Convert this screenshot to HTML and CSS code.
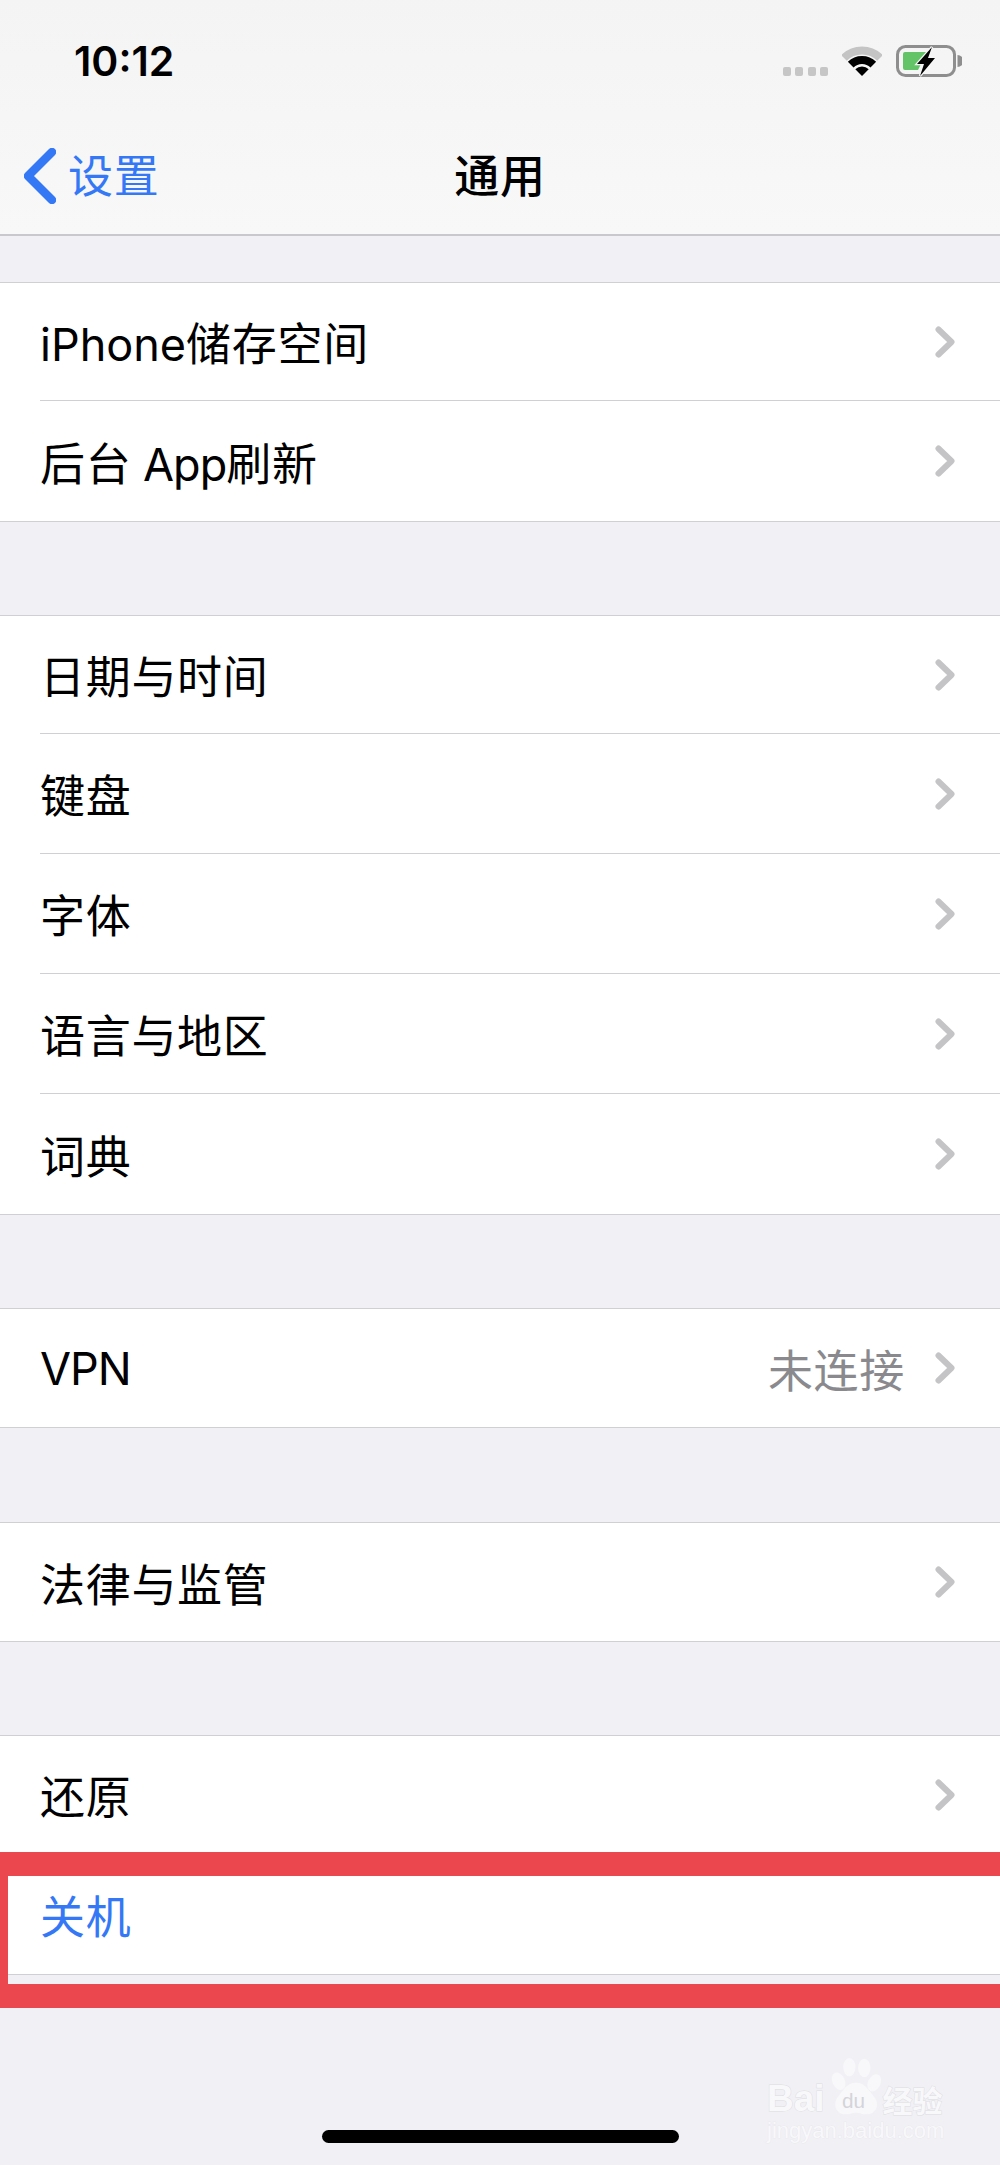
FILE: index.html
```html
<!DOCTYPE html>
<html lang="zh-CN">
<head>
    <meta charset="UTF-8">
    <meta name="viewport" content="width=device-width, initial-scale=1.0">
    <title>通用</title>
    <link rel="stylesheet" href="styles.css">
</head>
<body>

<div class="page">
    <header class="nav">
        <div class="status-bar">
            <span class="time">10:12</span>
            <div class="status-icons">
                <div class="signal"><i></i><i></i><i></i><i></i></div>
                <svg class="wifi" viewBox="0 0 40 30" width="40" height="30">
                    <path d="M1.97 11.97A25.5 25.5 0 0 1 38.03 11.97" fill="none" stroke="#c4c4c4" stroke-width="8"/>
                    <path d="M8.69 18.69A16 16 0 0 1 31.31 18.69" fill="none" stroke="#000" stroke-width="8"/>
                    <path d="M20 30L13.3 23.3A9.5 9.5 0 0 1 26.7 23.3Z" fill="#000"/>
                </svg>
                <svg class="battery" viewBox="0 0 66 32" width="66" height="32">
                    <rect x="1.5" y="1.5" width="57" height="29" rx="8" fill="none" stroke="#8e8e8e" stroke-width="3"/>
                    <path d="M61.5 10a6 6 0 0 1 0 12Z" fill="#8e8e8e"/>
                    <path d="M9 7H31L22 25H9a2 2 0 0 1-2-2V9a2 2 0 0 1 2-2Z" fill="#62c466"/>
                    <path d="M36 2L21 19H28L24 31L39 13H32Z" fill="#000" stroke="#f6f6f7" stroke-width="2.5" paint-order="stroke"/>
                </svg>
            </div>
        </div>
        <div class="nav-bar">
            <a class="back" href="#">
                <svg viewBox="0 0 32 56" width="32" height="56">
                    <path d="M28 4L4 28L28 52" fill="none" stroke="#3478f6" stroke-width="8.5" stroke-linecap="round" stroke-linejoin="round"/>
                </svg>
                <span>设置</span>
            </a>
            <h1>通用</h1>
            <span></span>
        </div>
    </header>

    <section class="group first">
        <a class="row" href="#"><span class="row-in"><span><span class="latin">iPhone</span>储存空间</span><svg class="chev" viewBox="0 0 20 32" width="20" height="32"><path d="M3.5 3.5L16.5 16L3.5 28.5"/></svg></span></a>
        <a class="row" href="#"><span class="row-in"><span>后台<span class="latin-tight"> App</span>刷新</span><svg class="chev" viewBox="0 0 20 32" width="20" height="32"><path d="M3.5 3.5L16.5 16L3.5 28.5"/></svg></span></a>
    </section>

    <section class="group">
        <a class="row" href="#"><span class="row-in"><span>日期与时间</span><svg class="chev" viewBox="0 0 20 32" width="20" height="32"><path d="M3.5 3.5L16.5 16L3.5 28.5"/></svg></span></a>
        <a class="row" href="#"><span class="row-in"><span>键盘</span><svg class="chev" viewBox="0 0 20 32" width="20" height="32"><path d="M3.5 3.5L16.5 16L3.5 28.5"/></svg></span></a>
        <a class="row" href="#"><span class="row-in"><span>字体</span><svg class="chev" viewBox="0 0 20 32" width="20" height="32"><path d="M3.5 3.5L16.5 16L3.5 28.5"/></svg></span></a>
        <a class="row" href="#"><span class="row-in"><span>语言与地区</span><svg class="chev" viewBox="0 0 20 32" width="20" height="32"><path d="M3.5 3.5L16.5 16L3.5 28.5"/></svg></span></a>
        <a class="row" href="#"><span class="row-in"><span>词典</span><svg class="chev" viewBox="0 0 20 32" width="20" height="32"><path d="M3.5 3.5L16.5 16L3.5 28.5"/></svg></span></a>
    </section>

    <section class="group">
        <a class="row" href="#"><span class="row-in"><span class="vpn">VPN</span><span class="value">未连接</span><svg class="chev" viewBox="0 0 20 32" width="20" height="32"><path d="M3.5 3.5L16.5 16L3.5 28.5"/></svg></span></a>
    </section>

    <section class="group legal">
        <a class="row" href="#"><span class="row-in"><span>法律与监管</span><svg class="chev" viewBox="0 0 20 32" width="20" height="32"><path d="M3.5 3.5L16.5 16L3.5 28.5"/></svg></span></a>
    </section>

    <section class="group">
        <a class="row" href="#"><span class="row-in"><span>还原</span><svg class="chev" viewBox="0 0 20 32" width="20" height="32"><path d="M3.5 3.5L16.5 16L3.5 28.5"/></svg></span></a>
        <a class="row action" href="#"><span class="row-in"><span>关机</span></span></a>
    </section>

    <div class="home-bar"></div>

    <!-- recuadro rojo y marca de agua van encima del contenido -->
    <div class="highlight"></div>
    <div class="watermark">
        <div class="wm-logo">
            <span class="wm-bai">Bai</span>
            <svg class="wm-paw" viewBox="0 0 64 70" width="54" height="58">
                <ellipse cx="11" cy="28" rx="7.5" ry="11" transform="rotate(-25 11 28)"/>
                <ellipse cx="24" cy="11" rx="7.5" ry="11"/>
                <ellipse cx="42" cy="12" rx="7.5" ry="11"/>
                <ellipse cx="54" cy="30" rx="7.5" ry="11" transform="rotate(25 54 30)"/>
                <path d="M32 30C43 30 47 39 54 47C62 57 55 68 45 68C39 68 37 66 32 66C27 66 25 68 19 68C9 68 3 57 10 47C17 39 21 30 32 30Z"/>
                <text x="15" y="60">du</text>
            </svg>
            <span class="wm-cn">经验</span>
        </div>
        <div class="wm-url">jingyan.baidu.com</div>
    </div>
</div>

</body>
</html>
```

FILE: styles.css
```css
* {
    box-sizing: border-box;
}

body {
    font-family: "Inter", "Noto Sans CJK SC", sans-serif;
    background-color: #f1f0f5;
    color: #000;
    margin: 0;
    padding: 0;
}

a {
    color: inherit;
    text-decoration: none;
}

.page {
    position: relative;
    width: 1000px;
    height: 2165px;
    overflow: hidden;
}

.nav {
    height: 236px;
    background: linear-gradient(180deg, #f4f4f5 0%, #f8f8f9 100%);
    border-bottom: 2px solid #c9c8cd;
}

.status-bar {
    height: 120px;
    display: flex;
    align-items: center;
    justify-content: space-between;
    padding: 0 38px 0 74px;
}

.time {
    font-size: 41px;
    font-weight: 600;
    margin-top: 2px;
}

.status-icons {
    display: flex;
    align-items: center;
    gap: 14px;
    margin-top: 2px;
}

.signal {
    display: flex;
    gap: 4.5px;
    margin-top: 21px;
}

.signal i {
    width: 8px;
    height: 9px;
    border-radius: 2px;
    background-color: #c6c6c6;
}

.wifi,
.battery {
    display: block;
}

.nav-bar {
    height: 114px;
    display: grid;
    grid-template-columns: 1fr auto 1fr;
    align-items: center;
    padding: 0 24px 8px;
}

.nav-bar h1 {
    margin: 0;
    font-size: 45px;
    font-weight: 500;
    letter-spacing: 0.7px;
}

.back {
    display: flex;
    align-items: center;
    gap: 12px;
    font-size: 45px;
    letter-spacing: 0.7px;
    color: #3478f6;
}

.back svg {
    display: block;
    margin-top: 5px;
}

.group {
    margin-top: 93px;
    background-color: #fff;
    border-top: 1px solid #d0cfd4;
    border-bottom: 1px solid #d0cfd4;
}

.group.first {
    margin-top: 46px;
}

.group.legal {
    margin-top: 94px;
}

.row {
    display: block;
    height: 118px;
    padding-left: 40px;
    font-size: 45px;
    letter-spacing: 0.7px;
}

.row-in {
    height: 100%;
    display: flex;
    align-items: center;
    padding-right: 45px;
}

.row-in > span:first-child {
    flex: 1;
}

.row + .row {
    height: 120px;
}

.row:not(:last-child) .row-in {
    border-bottom: 1px solid #d0cfd4;
}

.latin {
    letter-spacing: 0;
}

.latin-tight {
    letter-spacing: -1px;
}

.vpn {
    letter-spacing: -1px;
}

.value {
    color: #8a8a8e;
    margin-right: 30px;
}

.chev {
    display: block;
    flex: none;
}

.chev path {
    fill: none;
    stroke: #c4c4c7;
    stroke-width: 6;
    stroke-linecap: round;
    stroke-linejoin: round;
}

.action {
    color: #3478f6;
}

.home-bar {
    position: absolute;
    left: 322px;
    top: 2130px;
    width: 357px;
    height: 13px;
    border-radius: 7px;
    background-color: #000;
}

.highlight {
    position: absolute;
    left: 0;
    top: 1852px;
    width: 1000px;
    height: 156px;
    border: 24px solid #ea474f;
    border-left-width: 8px;
    border-right: none;
}

.watermark {
    position: absolute;
    left: 767px;
    top: 2058px;
    width: 190px;
    color: #f8f8fa;
}

.wm-logo {
    display: flex;
    align-items: flex-end;
    height: 58px;
}

.wm-bai {
    font-family: "Liberation Sans", sans-serif;
    font-size: 37px;
    font-weight: 700;
    line-height: 30px;
    margin-bottom: 2px;
    -webkit-text-stroke: 1px #dedee2;
    paint-order: stroke fill;
}

.wm-paw {
    display: block;
    flex: none;
    margin-left: 4px;
    fill: #f8f8fa;
}

.wm-paw text {
    font-family: "Liberation Sans", sans-serif;
    font-size: 25px;
    fill: #d4d4d9;
}

.wm-cn {
    font-family: "Noto Sans CJK SC", sans-serif;
    font-size: 30px;
    font-weight: 700;
    line-height: 30px;
    margin-bottom: 2px;
    white-space: nowrap;
    -webkit-text-stroke: 1px #dedee2;
    paint-order: stroke fill;
}

.wm-url {
    font-family: "Liberation Sans", sans-serif;
    font-size: 22px;
    line-height: 26px;
    margin-top: 2px;
    white-space: nowrap;
    -webkit-text-stroke: 0.6px #e6e6ea;
    paint-order: stroke fill;
}
```
